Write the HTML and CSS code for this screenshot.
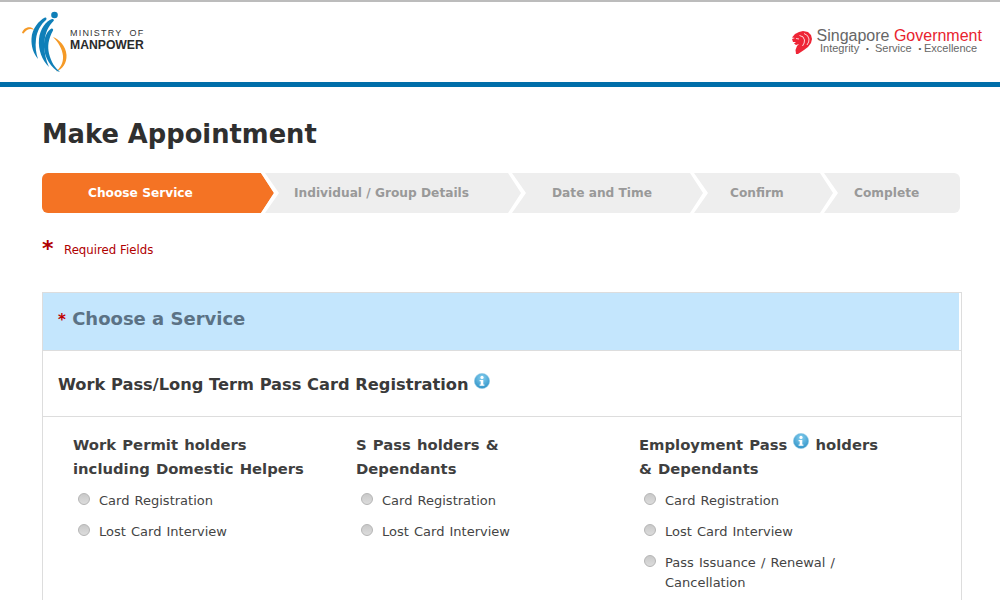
FILE: index.html
```html
<!DOCTYPE html>
<html lang="en">
<head>
<meta charset="utf-8">
<title>Make Appointment</title>
<link rel="stylesheet" href="styles.css">
</head>
<body>
<svg class="defs" width="0" height="0" aria-hidden="true">
  <defs>
    <radialGradient id="infoFill" cx="50%" cy="30%" r="75%">
      <stop offset="0" stop-color="#86d0f0"/>
      <stop offset="1" stop-color="#2a8ec4"/>
    </radialGradient>
    <symbol id="info" viewBox="0 0 16 16">
      <circle cx="8" cy="8" r="7.6" fill="url(#infoFill)" stroke="#8cc8e4" stroke-width=".6"/>
      <circle cx="8" cy="4.4" r="1.6" fill="#fff"/>
      <path d="M5.600 6.900h3.700v4.600h1.100v1.300H5.600v-1.300h1.100v-3.300H5.600z" fill="#fff"/>
    </symbol>
  </defs>
</svg>
<header class="site-header">
  <svg class="logo-mom" width="130" height="64" viewBox="22 10 130 64" role="img" aria-label="Ministry of Manpower">
    <path d="M22 33c1-4 5-6.500 9-5.500 1.500.4 2.500 1.300 3 2.500-3-2-7-1.500-10.500 3.500z" fill="#f59a27"/>
    <path d="M53 37c6 2.500 13 9 13.500 18 .4 8-4 14.500-10.500 16.500 4-3 7.500-8.500 7-15.500-.5-7-5-14-10-19z" fill="#f59a27"/>
    <circle cx="54.500" cy="15" r="3.300" fill="#0f7fb8"/>
    <path d="M45 17.500c-6 3-13 11-13.500 21-.4 8 2 15 6.500 20.500-2-6-3-12-2-20 1-8 5-15 10-19 1-1 .5-3-1-2.500z" fill="#0f7fb8"/>
    <path d="M52 19c-6 2-12 10-13 20-1 11 3 21 10 28-3-7-5.500-16-4.500-26 1-9 4-15 9-20 1-1 0-2.500-1.500-2z" fill="#0f7fb8"/>
    <path d="M51.500 28.500c-4 2-7 8-7.500 15-.7 10 4 21 13 27.500 1 .5 2 .7 3 .5-5-3-9-10-11-18-1.500-7-1-14 4-23 .6-1.300-.5-2.500-1.500-2z" fill="#0f7fb8"/>
    <text class="mom-top" x="70" y="35.700">MINISTRY OF</text>
    <text class="mom-bottom" x="70" y="48.700">MANPOWER</text>
  </svg>
  <svg class="logo-gov" width="192" height="32" viewBox="792 26 192 32" role="img" aria-label="Singapore Government">
    <path d="M795 34l4-2 4-1 5 1 3 3 1 4-1 4-3 4-4 3-6 4h-2l-.5-4 1.500-4 2-2-3 1-2-1.500 2-1.500-3 0-1-3 3-1-3-.5z" fill="#ee2536"/>
    <path d="M799.500 35.500q4.500 .5 5 4.500.3 3-2 6M804 33.500q4.500 1.500 5 5.500.3 3-2 6M796 38.500l3 .5" fill="none" stroke="#fff" stroke-width=".8"/>
    <text class="gov-name" x="816.500" y="40.500">Singapore <tspan class="gov-red">Government</tspan></text>
    <text class="gov-motto" x="820" y="52">Integrity</text>
    <text class="gov-dot" x="866" y="51">•</text>
    <text class="gov-motto" x="875" y="52">Service</text>
    <text class="gov-dot" x="918.500" y="51">•</text>
    <text class="gov-motto" x="924" y="52">Excellence</text>
  </svg>
</header>
<main class="content">
  <h1 class="page-title">Make Appointment</h1>
  <ol class="steps">
    <li class="step step-1 is-active">Choose Service</li>
    <li class="step step-2">Individual / Group Details</li>
    <li class="step step-3">Date and Time</li>
    <li class="step step-4">Confirm</li>
    <li class="step step-5">Complete</li>
  </ol>
  <p class="required"><span class="required-mark">*</span><span>Required Fields</span></p>
  <section class="panel">
    <h2 class="panel-title"><span class="panel-mark">*</span> Choose a Service</h2>
    <h3 class="group-title">Work Pass/Long Term Pass Card Registration <svg class="info" width="16" height="16"><use href="#info"/></svg></h3>
    <div class="columns">
      <div class="column">
        <h4 class="column-title">Work Permit holders<br>including Domestic Helpers</h4>
        <label class="option"><input type="radio" name="service"><span>Card Registration</span></label>
        <label class="option"><input type="radio" name="service"><span>Lost Card Interview</span></label>
      </div>
      <div class="column">
        <h4 class="column-title">S Pass holders &amp;<br>Dependants</h4>
        <label class="option"><input type="radio" name="service"><span>Card Registration</span></label>
        <label class="option"><input type="radio" name="service"><span>Lost Card Interview</span></label>
      </div>
      <div class="column">
        <h4 class="column-title">Employment Pass <svg class="info" width="16" height="16"><use href="#info"/></svg> holders<br>&amp; Dependants</h4>
        <label class="option"><input type="radio" name="service"><span>Card Registration</span></label>
        <label class="option"><input type="radio" name="service"><span>Lost Card Interview</span></label>
        <label class="option"><input type="radio" name="service"><span>Pass Issuance / Renewal /<br>Cancellation</span></label>
      </div>
    </div>
  </section>
</main>
</body>
</html>
```
FILE: styles.css
```css
* { box-sizing: border-box; }
html, body { margin: 0; padding: 0; overflow: hidden; height: 600px; }
body { background: #fff; color: #333; font-family: "DejaVu Sans", Verdana, sans-serif; }
.defs { display: block; height: 0; }

.site-header {
  height: 87px;
  border-top: 2px solid #bcbcbc;
  border-bottom: 5px solid #006ea9;
  display: flex;
  justify-content: space-between;
  padding: 8px 16px 0 22px;
}
.logo-mom, .logo-gov { display: block; }
.logo-gov { margin-top: 16px; }
.mom-top { font: 9px "Liberation Sans", sans-serif; letter-spacing: 1.2px; word-spacing: 3.5px; fill: #333; }
.mom-bottom { font: bold 12.2px "Liberation Sans", sans-serif; fill: #2b2b2b; }
.gov-name { font: 16px "Liberation Sans", sans-serif; fill: #666; }
.gov-red { fill: #e8232e; }
.gov-motto { font: 11px "Liberation Sans", sans-serif; fill: #666; }
.gov-dot { font: 8px "Liberation Sans", sans-serif; fill: #555; }

.content { padding: 0 38px 0 42px; }
.page-title { margin: 30px 0 0; font-size: 25.75px; line-height: 34px; font-weight: 700; color: #2f2f2f; }

.steps {
  list-style: none;
  margin: 22px 2px 0 0;
  padding: 0;
  height: 40px;
  display: flex;
  background: #eee;
  border-radius: 6px;
  overflow: hidden;
}
.step {
  position: relative;
  font-size: 12.2px;
  font-weight: 700;
  line-height: 41px;
  color: #999;
  white-space: nowrap;
}
.step::after {
  content: "";
  position: absolute;
  z-index: 2;
  top: 0;
  left: 100%;
  width: 20px;
  height: 40px;
  background: #fff;
  clip-path: polygon(0 0, 4px 0, 18px 20px, 4px 40px, 0 40px, 13px 20px);
}
.step-1 { width: 219px; padding-left: 46px; }
.step-2 { width: 247px; padding-left: 33px; }
.step-3 { width: 182px; padding-left: 44px; }
.step-4 { width: 130px; padding-left: 40px; }
.step-5 { flex: 1; padding-left: 34px; }
.step-5::after { display: none; }
.is-active { background: #f47324; color: #fff; }
.is-active::before {
  content: "";
  position: absolute;
  z-index: 1;
  top: 0;
  left: 100%;
  width: 14px;
  height: 40px;
  background: #f47324;
  clip-path: polygon(0 0, 13px 20px, 0 40px);
}

.required { margin: 26px 0 0; display: flex; align-items: flex-start; height: 28px; color: #b00000; font-size: 11.75px; line-height: 23px; }
.required-mark { width: 22px; font-size: 22px; line-height: 20px; font-weight: 700; }

.panel { margin: 25px 0 0; height: 400px; border: 1px solid #ddd; }
.panel-title {
  margin: 0 2px 0 0;
  height: 57px;
  padding-left: 15px;
  background: #c4e6fd;
  color: #5b7285;
  font-size: 18px;
  line-height: 52px;
  font-weight: 700;
}
.panel-mark { color: #c00000; font-size: 15px; font-weight: 700; }
.group-title {
  margin: 0;
  height: 67px;
  padding-left: 15px;
  border-top: 1px solid #ddd;
  border-bottom: 1px solid #ddd;
  font-size: 16.25px;
  line-height: 68px;
  font-weight: 700;
  color: #3a3a3a;
}
.info { vertical-align: 1px; }
.columns { display: grid; grid-template-columns: repeat(3, 283px); padding: 16px 0 0 30px; }
.column-title { margin: 0 0 10px; font-size: 14.8px; word-spacing: 1px; line-height: 24px; font-weight: 700; color: #3f3f3f; }
.option { display: flex; align-items: flex-start; margin-bottom: 11px; padding-left: 5px; font-size: 13px; word-spacing: 1px; line-height: 20px; color: #444; }
.option input {
  appearance: none;
  flex: none;
  width: 12px;
  height: 12px;
  margin: 2px 9px 0 0;
  border: 1px solid #b5b5b5;
  border-radius: 50%;
  background: linear-gradient(#c9c9c9, #dcdcdc);
}
```
